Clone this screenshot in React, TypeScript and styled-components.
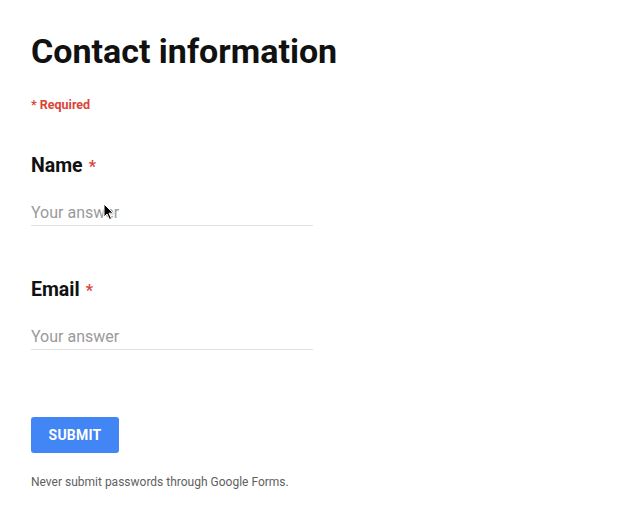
import React from 'react';
import styled, { createGlobalStyle } from 'styled-components';

const GlobalStyle = createGlobalStyle`
  html, body {
    margin: 0;
    padding: 0;
    background: #ffffff;
  }
  body {
    font-family: Roboto, "Liberation Sans", Arial, sans-serif;
    -webkit-font-smoothing: antialiased;
  }
`;

const Page = styled.div`
  position: relative;
  width: 637px;
  height: 521px;
  padding: 31px 0 0 31px;
  box-sizing: border-box;
  overflow: hidden;
`;

const Title = styled.h1`
  margin: 0;
  font-size: 34px;
  line-height: 40px;
  font-weight: 700;
  color: #111111;
`;

const RequiredNote = styled.div`
  margin-top: 26px;
  font-size: 12.5px;
  line-height: 16px;
  font-weight: 700;
  color: #db4437;
`;

const Question = styled.div<{ $first?: boolean }>`
  margin-top: ${(p) => (p.$first ? '41px' : '52px')};
  width: 282px;
`;

const Label = styled.div`
  font-size: 19.5px;
  line-height: 24px;
  font-weight: 700;
  color: #111111;
`;

const Star = styled.span`
  color: #db4437;
  font-size: 16px;
  margin-left: 6px;
`;

const AnswerInput = styled.input`
  display: block;
  margin-top: 21px;
  width: 100%;
  box-sizing: border-box;
  height: 26px;
  padding: 0 0 1px 0;
  border: none;
  border-bottom: 1px solid #e2e2e2;
  background: transparent;
  outline: none;
  font-family: Roboto, "Liberation Sans", Arial, sans-serif;
  font-size: 16px;
  line-height: 24px;
  color: #202124;

  &::placeholder {
    color: #9a9a9a;
  }
`;

const SubmitButton = styled.button`
  display: block;
  margin-top: 67px;
  width: 88px;
  height: 36px;
  border: none;
  border-radius: 3px;
  background: #4285f4;
  color: #ffffff;
  font-family: Roboto, "Liberation Sans", Arial, sans-serif;
  font-size: 14px;
  font-weight: 700;
  letter-spacing: 0.2px;
  cursor: pointer;
`;

const FooterNote = styled.div`
  margin-top: 21px;
  font-size: 12px;
  line-height: 16px;
  color: #5f5f5f;
`;

const Pointer = styled.svg`
  position: absolute;
  left: 103px;
  top: 203px;
  pointer-events: none;
`;

const questions = ['Name', 'Email'];

export default function App() {
  return (
    <>
      <GlobalStyle />
      <Page>
        <Title>Contact information</Title>
        <RequiredNote>* Required</RequiredNote>

        {questions.map((q, i) => (
          <Question key={q} $first={i === 0}>
            <Label>
              {q}
              <Star>*</Star>
            </Label>
            <AnswerInput placeholder="Your answer" />
          </Question>
        ))}

        <SubmitButton type="button">SUBMIT</SubmitButton>
        <FooterNote>Never submit passwords through Google Forms.</FooterNote>

        {/* mouse cursor captured in the screenshot */}
        <Pointer width="12" height="18" viewBox="0 0 12 18">
          <path
            d="M1 1 L1 14 L4 11 L6.5 16.5 L8.5 15.6 L6 10.2 L10.2 10.2 Z"
            fill="#000"
            stroke="#fff"
            strokeWidth="1"
            strokeLinejoin="round"
          />
        </Pointer>
      </Page>
    </>
  );
}
